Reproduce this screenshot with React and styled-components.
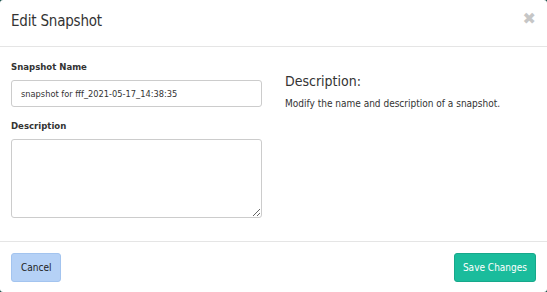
import React from 'react';
import styled, { createGlobalStyle } from 'styled-components';

const Global = createGlobalStyle`
    html, body {
        margin: 0;
        padding: 0;
        background: #0f4a44;
    }
    body {
        font-family: 'DejaVu Sans Condensed', 'Liberation Sans', sans-serif;
        color: #333;
    }
`;

const Modal = styled.div`
    width: 547px;
    height: 292px;
    background: #fff;
    border-radius: 3px;
    display: flex;
    flex-direction: column;
    box-sizing: border-box;
`;

const Header = styled.div`
    height: 47px;
    flex-shrink: 0;
    box-sizing: border-box;
    padding: 0 11px;
    display: flex;
    align-items: center;
    justify-content: space-between;
    border-bottom: 1px solid #e5e5e5;
`;

const Title = styled.h4`
    margin: 0 0 4px;
    font-size: 15px;
    letter-spacing: -0.2px;
    font-weight: normal;
    color: #333;
`;

const Close = styled.span`
    font-family: 'DejaVu Sans', sans-serif;
    font-size: 16px;
    font-weight: bold;
    color: #c6c6c6;
    margin-top: -9px;
    margin-right: 0;
`;

const Body = styled.div`
    flex: 1;
    padding: 14px 11px 0;
    display: grid;
    grid-template-columns: 251px 1fr;
    column-gap: 23px;
    align-items: start;
`;

const Field = styled.div`
    margin-bottom: 13px;
`;

const Label = styled.label`
    display: block;
    font-size: 9.5px;
    font-weight: bold;
    margin-bottom: 8px;
`;

const Input = styled.input`
    display: block;
    width: 100%;
    box-sizing: border-box;
    height: 27px;
    border: 1px solid #ccc;
    border-radius: 3px;
    padding: 0 9px;
    font-family: inherit;
    font-size: 9.2px;
    color: #333;
`;

const TextArea = styled.textarea`
    display: block;
    width: 100%;
    box-sizing: border-box;
    height: 79px;
    border: 1px solid #ccc;
    border-radius: 3px;
    font-family: inherit;
`;

const Side = styled.div`
    padding-top: 12px;
`;

const SideTitle = styled.h3`
    margin: 0 0 9px;
    font-size: 14px;
    font-weight: normal;
`;

const SideText = styled.p`
    margin: 0;
    font-size: 10px;
`;

const Footer = styled.div`
    height: 51px;
    flex-shrink: 0;
    box-sizing: border-box;
    border-top: 1px solid #e5e5e5;
    padding: 11px 11px 0;
    display: flex;
    justify-content: space-between;
    align-items: flex-start;
`;

const Button = styled.button`
    height: 29px;
    padding: 0 ${p => p.primary ? '8px' : '9px'};
    border-radius: 3px;
    font-family: inherit;
    font-size: 10px;
    border: 1px solid ${p => p.primary ? '#17a88b' : '#a3c4ef'};
    background: ${p => p.primary ? '#1abc9c' : '#b5d1f6'};
    color: ${p => p.primary ? '#fff' : '#222'};
`;

const App = () => (
    <>
        <Global />
        <Modal>
            <Header>
                <Title>Edit Snapshot</Title>
                <Close>✖</Close>
            </Header>
            <Body>
                <div>
                    <Field>
                        <Label>Snapshot Name</Label>
                        <Input defaultValue="snapshot for fff_2021-05-17_14:38:35" />
                    </Field>
                    <Field>
                        <Label>Description</Label>
                        <TextArea />
                    </Field>
                </div>
                <Side>
                    <SideTitle>Description:</SideTitle>
                    <SideText>Modify the name and description of a snapshot.</SideText>
                </Side>
            </Body>
            <Footer>
                <Button>Cancel</Button>
                <Button primary>Save Changes</Button>
            </Footer>
        </Modal>
    </>
);

export default App;
